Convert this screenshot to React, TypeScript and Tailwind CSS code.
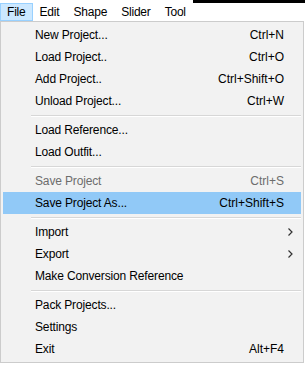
import React from "react";

type Item = {
  label?: string;
  shortcut?: string;
  sub?: boolean;
  disabled?: boolean;
  active?: boolean;
  sep?: boolean;
};

const items: Item[] = [
  { label: "New Project...", shortcut: "Ctrl+N" },
  { label: "Load Project..", shortcut: "Ctrl+O" },
  { label: "Add Project..", shortcut: "Ctrl+Shift+O" },
  { label: "Unload Project...", shortcut: "Ctrl+W" },
  { sep: true },
  { label: "Load Reference..." },
  { label: "Load Outfit..." },
  { sep: true },
  { label: "Save Project", shortcut: "Ctrl+S", disabled: true },
  { label: "Save Project As...", shortcut: "Ctrl+Shift+S", active: true },
  { sep: true },
  { label: "Import", sub: true },
  { label: "Export", sub: true },
  { label: "Make Conversion Reference" },
  { sep: true },
  { label: "Pack Projects..." },
  { label: "Settings" },
  { label: "Exit", shortcut: "Alt+F4" },
];

const menus = ["File", "Edit", "Shape", "Slider", "Tool"];

const Chevron = () => (
  <svg width="5" height="8" viewBox="0 0 5 8" className="block">
    <path d="M0.5 0.5 L4 4 L0.5 7.5" fill="none" stroke="#333333" strokeWidth="1.2" />
  </svg>
);

const App: React.FC = () => {
  return (
    <div
      className="w-[305px] h-[365px] bg-white overflow-hidden text-[12px] text-black"
      style={{ fontFamily: '"Liberation Sans", Arial, sans-serif' }}
    >
      <div className="flex h-[21px] tracking-[-0.2px]">
        {menus.map((m, i) => (
          <div
            key={m}
            className={
              i === 0
                ? "mt-[3px] h-[18px] px-[6px] flex items-center border border-[#99d1ff] bg-[#cce8ff]"
                : "mt-[3px] h-[18px] px-[6px] flex items-center border border-transparent"
            }
          >
            {m}
          </div>
        ))}
        <div className="flex-1 border-t-[3px] border-black" />
      </div>

      <div className="w-[304px] h-[342px] border border-[#cccccc] bg-[#f2f2f2] p-[2px]">
        {items.map((it, i) =>
          it.sep ? (
            <div key={i} className="h-[7px] pt-[3px] pl-[28px]">
              <div className="border-t border-[#d7d7d7] border-b border-b-white" />
            </div>
          ) : (
            <div
              key={i}
              className={
                it.active
                  ? "h-[22px] flex items-center pl-[32px] bg-[#91c9f7]"
                  : "h-[22px] flex items-center pl-[32px]"
              }
            >
              <span
                className={
                  it.disabled
                    ? "flex-1 tracking-[-0.15px] text-[#6d6d6d]"
                    : "flex-1 tracking-[-0.15px]"
                }
              >
                {it.label}
              </span>
              {it.shortcut && (
                <span className={it.disabled ? "text-[#6d6d6d]" : ""}>
                  {it.shortcut}
                </span>
              )}
              <div className="w-[17px] h-full flex items-center pl-[4px]">
                {it.sub && <Chevron />}
              </div>
            </div>
          )
        )}
      </div>
    </div>
  );
};

export default App;
